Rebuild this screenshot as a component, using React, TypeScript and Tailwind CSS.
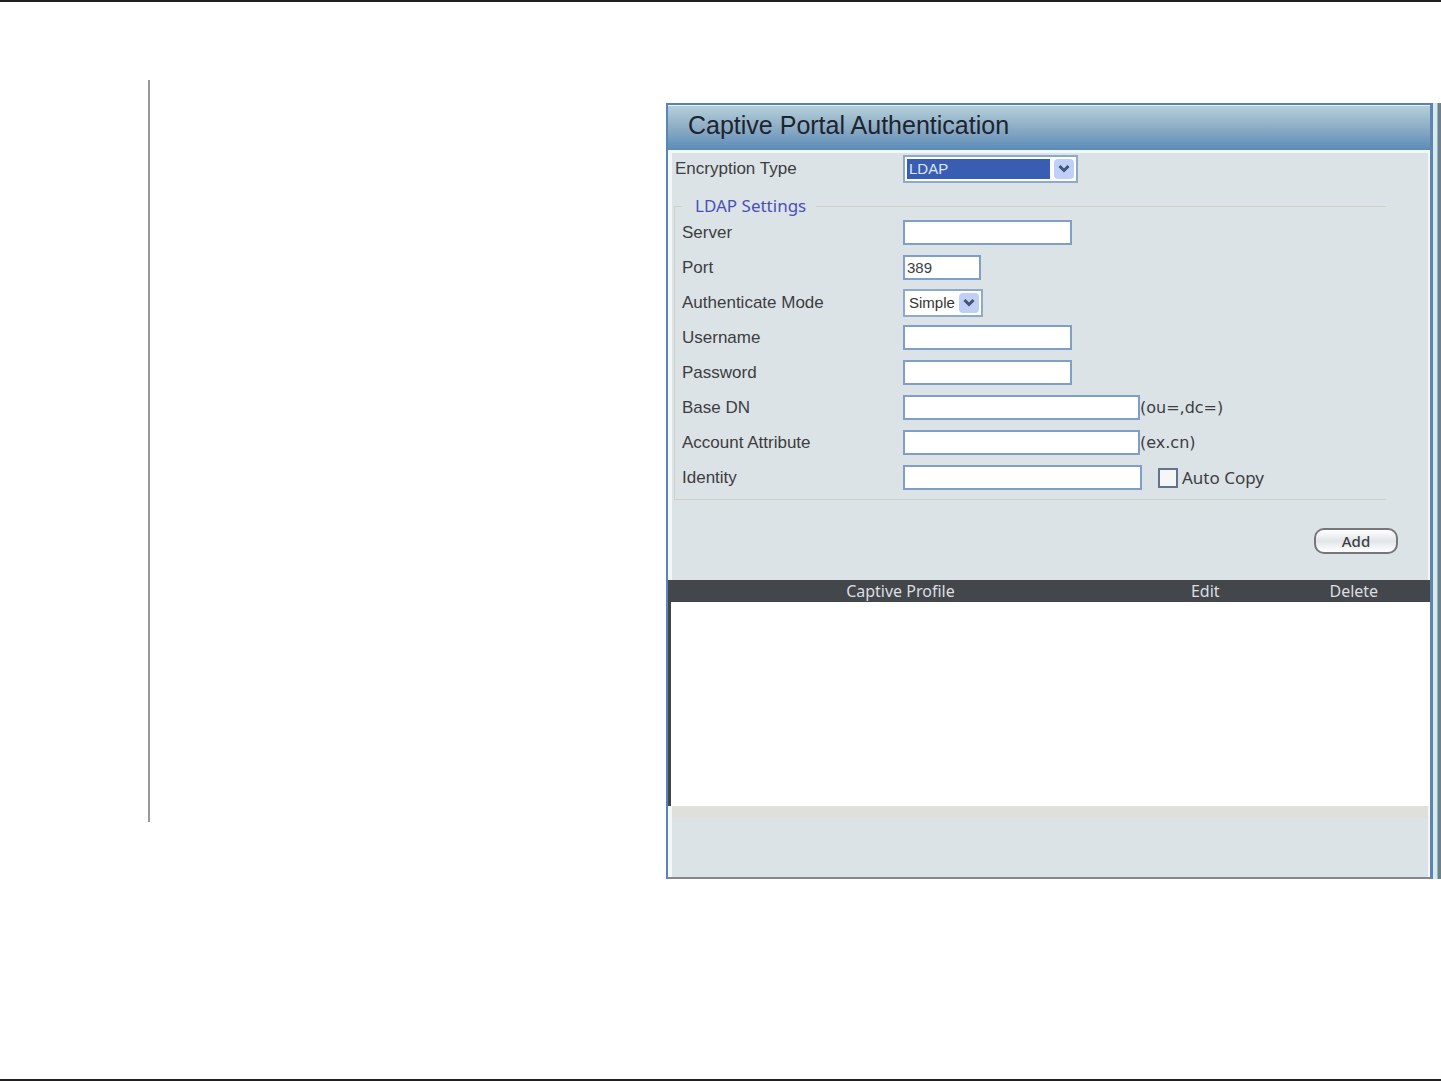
import React from 'react';
import { clsx } from 'clsx';

const Chevron: React.FC = () => (
  <svg viewBox="0 0 12 10" className="h-[10px] w-3" fill="none" stroke="#3f5478" strokeWidth="3">
    <path d="M1.5 2 L6 6.5 L10.5 2" />
  </svg>
);

interface SelectBoxProps {
  id: string;
  options: string[];
  highlighted?: boolean;
  className?: string;
}

const SelectBox: React.FC<SelectBoxProps> = ({ id, options, highlighted, className }) => (
  <div className={clsx('flex h-7 items-stretch border-2 border-[#8fa9cd] bg-white p-[2px]', className)}>
    <select
      id={id}
      className={clsx(
        'min-w-0 flex-1 appearance-none text-[15px] leading-5 outline-none',
        highlighted ? 'mr-1 bg-[#3a5db4] pl-[2px] text-[#dfe8f8]' : 'bg-white pl-[2px] text-[#333]'
      )}
    >
      {options.map((option) => (
        <option key={option}>{option}</option>
      ))}
    </select>
    <span className="pointer-events-none flex w-5 items-center justify-center rounded-sm bg-[#bfcff5]">
      <Chevron />
    </span>
  </div>
);

interface FieldRowProps {
  id: string;
  label: string;
  children: React.ReactNode;
}

const FieldRow: React.FC<FieldRowProps> = ({ id, label, children }) => (
  <div className="flex h-[35px] items-center">
    <label htmlFor={id} className="w-[221px] shrink-0 text-[17px] leading-5">
      {label}
    </label>
    {children}
  </div>
);

interface TextBoxProps {
  id: string;
  type?: string;
  defaultValue?: string;
  className: string;
}

const TextBox: React.FC<TextBoxProps> = ({ id, type = 'text', defaultValue, className }) => (
  <input
    id={id}
    type={type}
    defaultValue={defaultValue}
    className={clsx('h-[25px] border-2 border-[#7f9fca] bg-white px-[2px] text-[15px] outline-none', className)}
  />
);

const Hint: React.FC<{ children: React.ReactNode }> = ({ children }) => (
  <span className="font-['DejaVu_Sans',sans-serif] text-base leading-5">{children}</span>
);

const altFont = "font-['Noto_Sans','DejaVu_Sans',sans-serif]";

export default function App() {
  return (
    <div className="flex min-h-screen items-start border-y-2 border-[#231f20] bg-white font-['Liberation_Sans',Arial,sans-serif] text-[#3d3d42]">
      {/* Margin rule */}
      <div className="mt-[78px] h-[742px] w-[150px] shrink-0 border-r-2 border-[#999]" />

      <main className="mt-[101px] ml-[516px] flex min-w-0 flex-1">
        <section className="min-w-0 flex-1 border-t-2 border-r-[3px] border-b-2 border-l-2 border-t-[#5b80b5] border-r-[#5f84b3] border-b-[#85868f] border-l-[#5b84ba] bg-[#dce3e6]">
          <h1 className="h-[45px] border-t border-[#e6f2ec] bg-linear-to-b from-[#b3d0da] via-[#8dacc5] to-[#5a8bb8] pl-5 text-[25px] leading-[38px] text-[#1d2430]">
            Captive Portal Authentication
          </h1>

          <form className="border-t-[3px] border-r-2 border-l-4 border-[#f4f8f5]">
            <div className="flex h-8 items-center pl-[3px]">
              <label htmlFor="encryption" className="w-[228px] shrink-0 text-[17px] leading-5">
                Encryption Type
              </label>
              <SelectBox id="encryption" options={['LDAP']} highlighted className="w-[175px]" />
            </div>

            <fieldset className="mt-3 mr-[42px] ml-[2px] border border-r-0 border-[#cdd1c6] pb-1 pl-[7px]">
              <legend className={clsx('pr-[10px] pl-[13px] text-[17px] leading-[18px] text-[#4a4fbb]', altFont)}>
                LDAP Settings
              </legend>
              <FieldRow id="server" label="Server">
                <TextBox id="server" className="w-[169px]" />
              </FieldRow>
              <FieldRow id="port" label="Port">
                <TextBox id="port" defaultValue="389" className="w-[78px]" />
              </FieldRow>
              <FieldRow id="mode" label="Authenticate Mode">
                <SelectBox id="mode" options={['Simple']} className="w-[80px]" />
              </FieldRow>
              <FieldRow id="username" label="Username">
                <TextBox id="username" className="w-[169px]" />
              </FieldRow>
              <FieldRow id="password" label="Password">
                <TextBox id="password" type="password" className="w-[169px]" />
              </FieldRow>
              <FieldRow id="base-dn" label="Base DN">
                <TextBox id="base-dn" className="w-[237px]" />
                <Hint>(ou=,dc=)</Hint>
              </FieldRow>
              <FieldRow id="account" label="Account Attribute">
                <TextBox id="account" className="w-[237px]" />
                <Hint>(ex.cn)</Hint>
              </FieldRow>
              <FieldRow id="identity" label="Identity">
                <TextBox id="identity" className="w-[239px]" />
                <label className={clsx('ml-4 flex items-center gap-1 text-[17px] leading-5', altFont)}>
                  <input type="checkbox" className="size-5 appearance-none border-2 border-[#66708f] bg-[#f4f7f8]" />
                  Auto Copy
                </label>
              </FieldRow>
            </fieldset>

            <div className="flex justify-end pt-7 pr-[30px] pb-[26px]">
              <button
                type="button"
                className={clsx(
                  'h-[26px] w-[84px] rounded-[10px] border-2 border-[#77767a] bg-linear-to-b from-white via-[#e2e5e8] to-white text-[15px] leading-5 font-medium',
                  altFont
                )}
              >
                Add
              </button>
            </div>
          </form>

          <table className="w-full table-fixed border-separate border-spacing-0">
            <thead className={clsx('bg-[#43464b] text-[16px] leading-[22px] text-[#dcdee0]', altFont)}>
              <tr>
                <th className="w-[61%] p-0 font-normal">Captive Profile</th>
                <th className="w-[19%] p-0 font-normal">Edit</th>
                <th className="w-[20%] p-0 font-normal">Delete</th>
              </tr>
            </thead>
            <tbody>
              <tr>
                <td colSpan={3} className="h-[204px] border-l-[3px] border-[#43464b] bg-white" />
              </tr>
            </tbody>
          </table>

          <footer className="border-r-2 border-l-4 border-[#f4f8f5]">
            <div className="h-[71px] border-t-[12px] border-[#dfdfdb]" />
          </footer>
        </section>

        {/* Frame edge */}
        <div className="w-2 border-r-[3px] border-l-4 border-r-[#6f7f89] border-l-[#d6ebee] bg-[#8fb5c2]" />
      </main>
    </div>
  );
}
